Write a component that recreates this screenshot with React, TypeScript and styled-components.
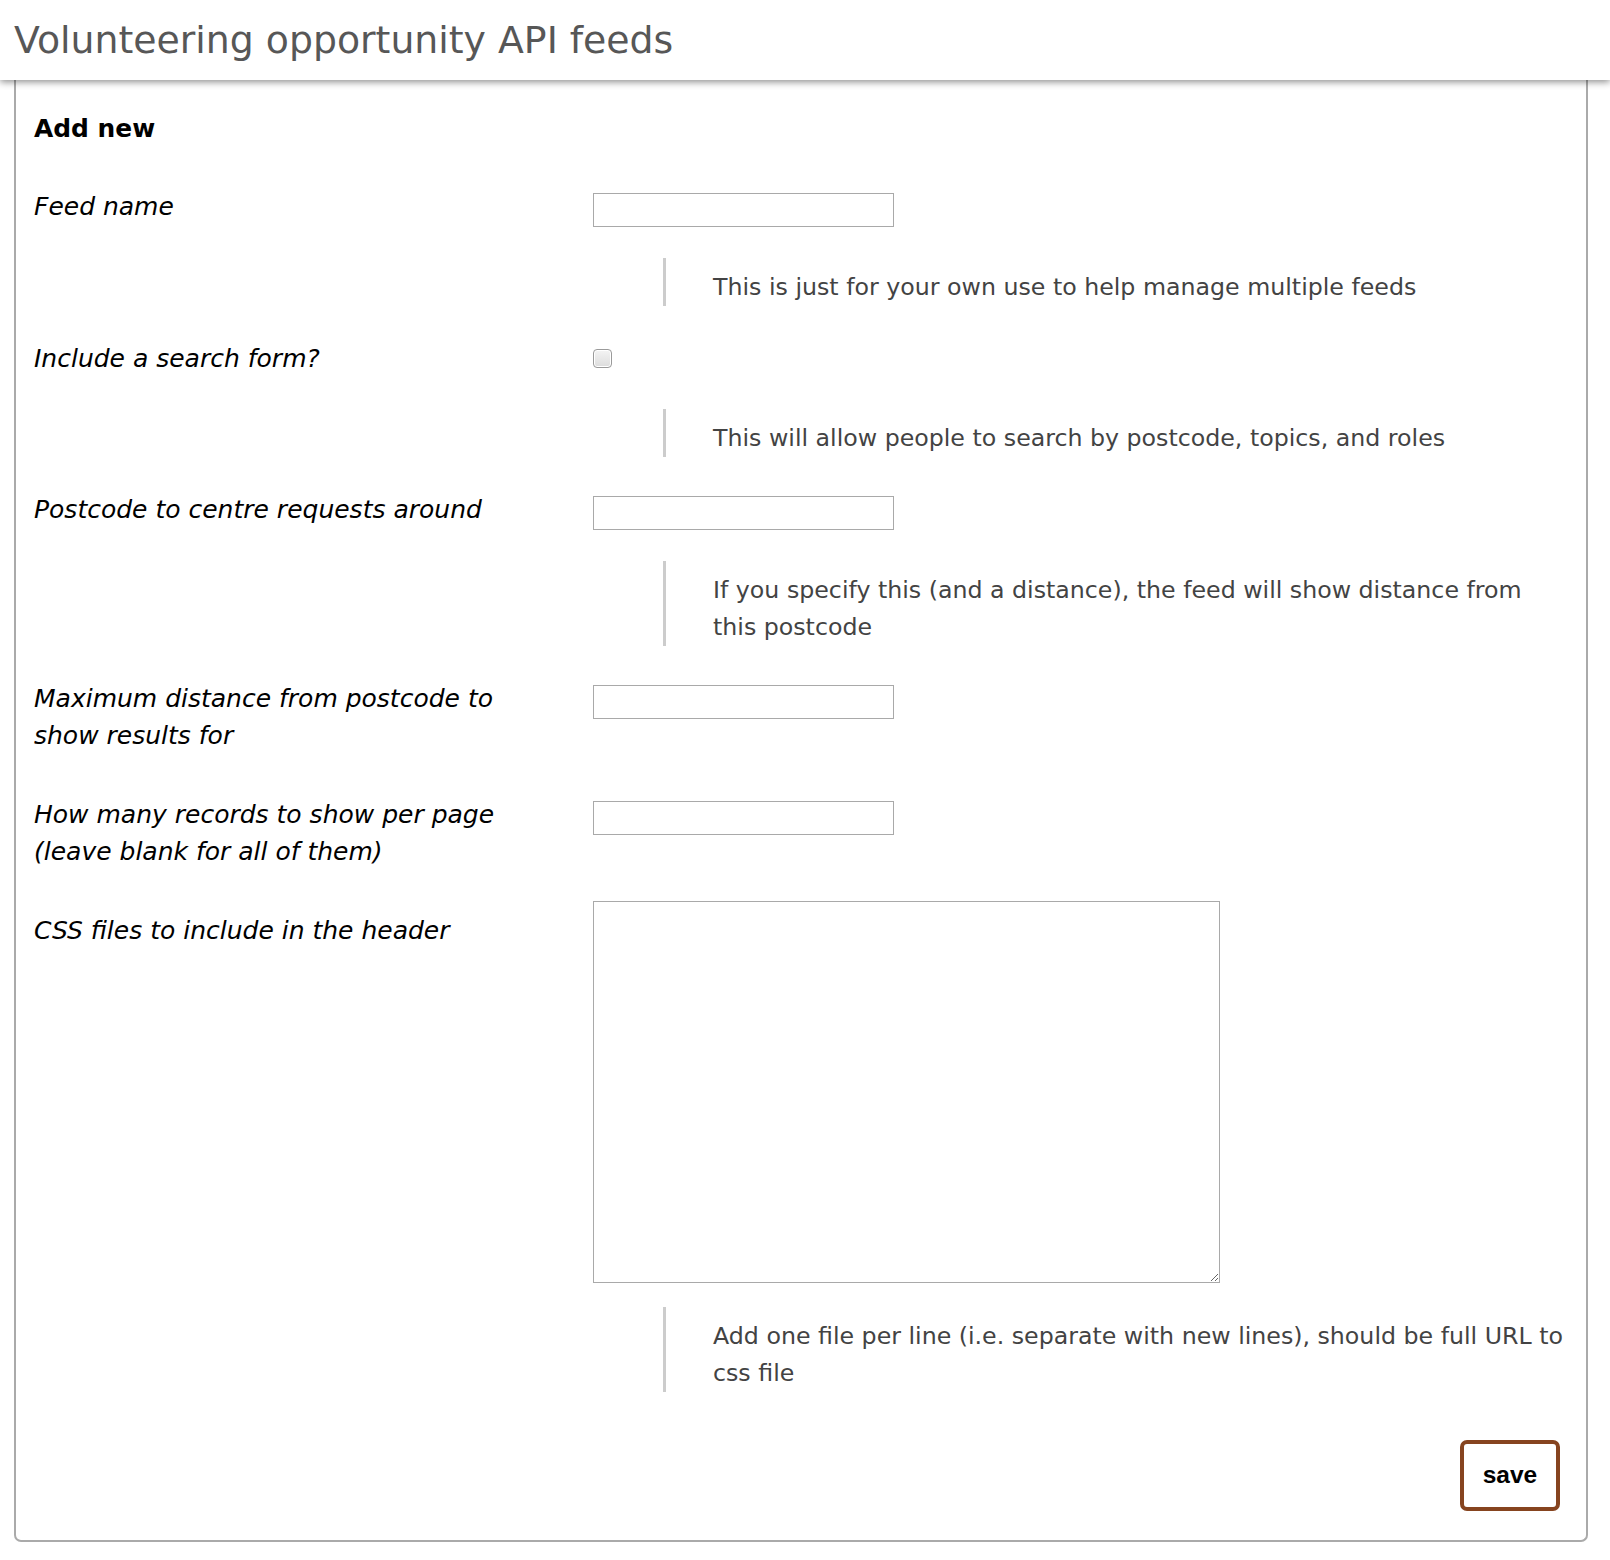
import React from "react";
import styled, { createGlobalStyle } from "styled-components";

const GlobalStyle = createGlobalStyle`
  html, body { margin: 0; padding: 0; background: #fff; }
  body { font-family: "DejaVu Sans", Verdana, sans-serif; }
  * { box-sizing: border-box; }
`;

const Header = styled.header`
  position: relative;
  z-index: 1;
  height: 80px;
  padding: 19px 14px 0;
  background: #fff;
  box-shadow: 0 2px 7px rgba(0, 0, 0, 0.45);
`;

const Title = styled.h1`
  margin: 0;
  font-family: "DejaVu Sans", Verdana, sans-serif;
  font-weight: normal;
  font-size: 37.8px;
  line-height: 43px;
  color: #575757;
`;

const Card = styled.main`
  width: 1574px;
  margin: 0 0 0 14px;
  padding: 29.5px 18px 29px 18px;
  border: 2px solid #aaa;
  border-top: none;
  border-radius: 0 0 7px 7px;
`;

const Heading = styled.h2`
  margin: 0 0 31.5px;
  font-size: 24.9px;
  line-height: 37px;
  font-weight: bold;
  color: #000;
`;

const Row = styled.div`
  display: grid;
  grid-template-columns: 559px 1fr;
  margin-bottom: 24px;
`;

const Label = styled.label`
  display: block;
  width: 505px;
  padding: 10px 0 8px;
  font-style: italic;
  font-size: 25px;
  line-height: 37px;
  color: #000;
`;

const Control = styled.div`
  display: flex;
  flex-direction: column;
  align-items: flex-start;
`;

const ControlLine = styled.div`
  height: 50px;
`;

const TextInput = styled.input`
  display: block;
  width: 301px;
  height: 34px;
  margin: 15px 0 0;
  padding: 2px 6px;
  border: 1px solid #a9a9a9;
  border-radius: 0;
  background: #fff;
  font-size: 18px;
  outline: none;
`;

const CheckBox = styled.input`
  appearance: none;
  display: block;
  width: 19px;
  height: 19px;
  margin: 19.5px 0 0;
  border: 1px solid #9a9a9a;
  border-radius: 4px;
  background: linear-gradient(#f4f4f4, #dcdcdc);
  box-shadow: inset 0 0 0 1px #fff;
`;

const TextArea = styled.textarea`
  display: block;
  width: 627px;
  height: 382px;
  margin: -1px 0 0;
  border: 1px solid #a9a9a9;
  border-radius: 0;
  background: #fff;
  outline: none;
  font-size: 18px;
`;

const Help = styled.div<{ $gap: number }>`
  margin: ${(p) => p.$gap}px -3px 0 70px;
  padding: 11px 0 0 47px;
  border-left: 3px solid #cccccc;
  font-size: 23.7px;
  line-height: 37px;
  color: #434343;
`;

const Actions = styled.div`
  display: flex;
  justify-content: flex-end;
  margin-top: 48px;
  padding-right: 8px;
`;

const SaveButton = styled.button`
  width: 100px;
  height: 71px;
  padding: 0;
  border: 4px solid #86441f;
  border-radius: 7px;
  background: #fff;
  font-family: "Liberation Sans", Arial, sans-serif;
  font-weight: bold;
  font-size: 24.5px;
  color: #000;
  cursor: pointer;
`;

type Field = {
  label: string;
  kind: "text" | "checkbox" | "textarea";
  help?: string;
};

const fields: Field[] = [
  { label: "Feed name", kind: "text", help: "This is just for your own use to help manage multiple feeds" },
  { label: "Include a search form?", kind: "checkbox", help: "This will allow people to search by postcode, topics, and roles" },
  {
    label: "Postcode to centre requests around",
    kind: "text",
    help: "If you specify this (and a distance), the feed will show distance from this postcode",
  },
  { label: "Maximum distance from postcode to show results for", kind: "text" },
  { label: "How many records to show per page (leave blank for all of them)", kind: "text" },
  {
    label: "CSS files to include in the header",
    kind: "textarea",
    help: "Add one file per line (i.e. separate with new lines), should be full URL to css file",
  },
];

export default function App() {
  return (
    <>
      <GlobalStyle />
      <Header>
        <Title>Volunteering opportunity API feeds</Title>
      </Header>
      <Card>
        <Heading>Add new</Heading>
        {fields.map((f, i) => (
          <Row key={i}>
            <Label htmlFor={`f${i}`}>{f.label}</Label>
            <Control>
              {f.kind === "textarea" ? (
                <TextArea id={`f${i}`} />
              ) : (
                <ControlLine>
                  {f.kind === "checkbox" ? (
                    <CheckBox id={`f${i}`} type="checkbox" />
                  ) : (
                    <TextInput id={`f${i}`} type="text" />
                  )}
                </ControlLine>
              )}
              {f.help && <Help $gap={f.kind === "textarea" ? 24 : 29.5}>{f.help}</Help>}
            </Control>
          </Row>
        ))}
        <Actions>
          <SaveButton type="button">save</SaveButton>
        </Actions>
      </Card>
    </>
  );
}
